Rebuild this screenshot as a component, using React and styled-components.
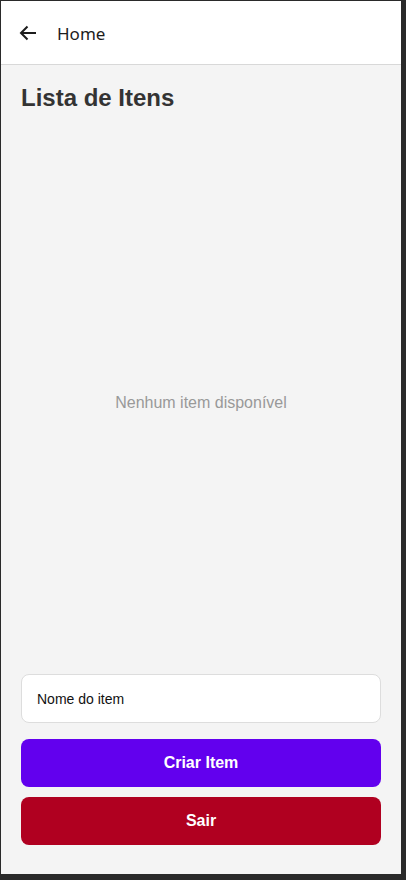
import React from "react";
import styled, { createGlobalStyle } from "styled-components";

const Global = createGlobalStyle`
  html, body { margin: 0; padding: 0; background: #2a2a2a; }
  #root { width: 406px; height: 880px; }
  * { box-sizing: border-box; }
`;

const Frame = styled.div`
  margin: 1px 0 0 1px;
  width: 400px;
  height: 873px;
  background: #f4f4f4;
  display: flex;
  flex-direction: column;
  overflow: hidden;
`;

const Header = styled.header`
  height: 64px;
  flex: 0 0 64px;
  background: #ffffff;
  border-bottom: 1px solid #d8d8d8;
  display: flex;
  align-items: center;
  padding-left: 17px;
  gap: 19px;
`;

const BackButton = styled.button`
  border: none;
  background: none;
  padding: 0;
  width: 20px;
  height: 20px;
  display: flex;
  align-items: center;
  justify-content: center;
  color: #1c1c1c;
`;

const HeaderTitle = styled.span`
  font-family: "Noto Sans", "Open Sans", sans-serif;
  font-size: 17px;
  font-weight: 400;
  color: #1c1c1c;
  margin-top: 1px;
`;

const Content = styled.main`
  flex: 1;
  display: flex;
  flex-direction: column;
  padding: 19px 20px 29px;
`;

const Title = styled.h1`
  margin: 0;
  font-family: "Liberation Sans", Arial, sans-serif;
  font-size: 24px;
  font-weight: 700;
  color: #333333;
  line-height: 27px;
`;

const List = styled.div`
  flex: 1;
  display: flex;
  align-items: center;
  justify-content: center;
  padding-top: 36px;
`;

const EmptyText = styled.p`
  margin: 0;
  font-family: "Liberation Sans", Arial, sans-serif;
  font-size: 16px;
  color: #999999;
`;

const Input = styled.input`
  margin-top: 16px;
  height: 49px;
  width: 100%;
  background: #ffffff;
  border: 1px solid #dddddd;
  border-radius: 8px;
  padding: 0 15px;
  font-family: "Liberation Sans", Arial, sans-serif;
  font-size: 14px;
  color: #000;
  outline: none;
  &::placeholder { color: #111; }
`;

const ActionButton = styled.button`
  height: 48px;
  width: 100%;
  border: none;
  border-radius: 8px;
  background: ${(p) => p.$bg};
  color: #ffffff;
  font-family: "Liberation Sans", Arial, sans-serif;
  font-size: 16px;
  font-weight: 700;
  margin-top: ${(p) => p.$mt}px;
`;

export default function App() {
  return (
    <>
      <Global />
      <Frame>
        <Header>
          <BackButton aria-label="Voltar">
            <svg width="18" height="16" viewBox="0 0 18 16" fill="none">
              <path d="M17 8H2.5M8.5 1.5L2 8l6.5 6.5" stroke="currentColor" strokeWidth="2" />
            </svg>
          </BackButton>
          <HeaderTitle>Home</HeaderTitle>
        </Header>
        <Content>
          <Title>Lista de Itens</Title>
          <List>
            <EmptyText>Nenhum item disponível</EmptyText>
          </List>
          <Input placeholder="Nome do item" />
          <ActionButton $bg="#6200ee" $mt={16}>Criar Item</ActionButton>
          <ActionButton $bg="#b00020" $mt={10}>Sair</ActionButton>
        </Content>
      </Frame>
    </>
  );
}
